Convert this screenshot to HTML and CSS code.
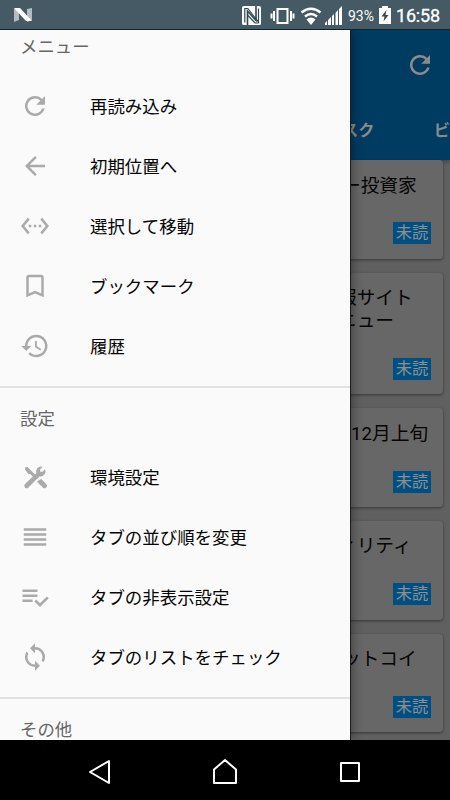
FILE: index.html
```
<!DOCTYPE html>
<html lang="ja">
<head>
<meta charset="utf-8">
<title>メニュー</title>
<link rel="stylesheet" href="styles.css">
</head>
<body>
<div class="phone">
  <header class="status">
    <svg class="android-n" width="20" height="16" viewBox="0 0 20 16"><path fill="#b3bdc1" d="M1 2l5-1v12l-5 2zM14 2l5-1v12l-5 2z"/><path fill="#fff" d="M1 1h6l12 13h-6z"/></svg>
    <div class="status-right">
      <svg width="101" height="22" viewBox="0 0 101 22">
        <path fill="#fff" d="M2 1h15q2 0 2 2v16q0 1-2 1H2q-2 0-2-1V3q0-2 2-2z"/>
        <path fill="none" stroke="#2f4855" stroke-width="1.600" d="M5.500 20V6L14 15.500V1"/>
        <path fill="none" stroke="#2f4855" stroke-width="1.200" d="M2.800 17.500V3.500h3L16.500 17V3.500M5.500 10l7.500 8h3.500"/>
        <path fill="none" stroke="#fff" stroke-width="2" d="M35.500 4h10v14h-10zM32 6v10M49 6v10M29.500 8.500v5M51.500 8.500v5"/>
        <g transform="translate(59 1)" fill="none" stroke="#fff" stroke-width="2.500"><path d="M.5 6.500q9.500-7.500 19 0M4 10.500q6-5 12 0"/><path fill="#fff" stroke="none" d="M5.500 13.500q4.500-4 9 0L10 19z"/></g>
        <path fill="#fff" d="M83 20v-2l2-2v4zM86 20v-5l3-3v8zM90 20v-9l2-2v11zM93.500 20V8l2.500-3v15zM97 20V4l3-3v19z"/>
      </svg>
      <span class="percent">93%</span>
      <svg class="battery" width="12" height="18" viewBox="0 0 12 18"><path fill="#fff" d="M0 2h3V0h6v2h3v16H0z"/><path fill="#37474f" d="M7.500 4L2.500 10.500h3L4.500 15.500l5-6.500h-3z"/></svg>
      <span class="clock">16:58</span>
    </div>
  </header>

  <main class="screen">
    <section class="app">
      <div class="appbar">
        <div class="toolbar"><svg width="30" height="30" viewBox="0 0 24 24" fill="#8b8b8b"><path d="M17.650 6.350A8 8 0 1 0 19.730 14h-2.080A6 6 0 1 1 12 6c1.660 0 3.140.69 4.220 1.780L13 11h7V4z"/></svg></div>
        <div class="tabs"><span class="tab-a">スク</span><span>ビ</span></div>
      </div>
      <div class="cards">
        <article class="card"><p class="title near">ー投資家</p><span class="badge">未読</span></article>
        <article class="card tall"><p class="title">報サイト<br>ニュー</p><span class="badge">未読</span></article>
        <article class="card"><p class="title date">12月上旬</p><span class="badge">未読</span></article>
        <article class="card"><p class="title">ィリティ</p><span class="badge">未読</span></article>
        <article class="card"><p class="title near">ットコイ</p><span class="badge">未読</span></article>
      </div>
    </section>

    <nav class="drawer">
      <h2>メニュー</h2>
      <ul>
        <li><svg viewBox="0 0 24 24"><path d="M17.650 6.350A8 8 0 1 0 19.730 14h-2.080A6 6 0 1 1 12 6c1.660 0 3.140.69 4.220 1.780L13 11h7V4z"/></svg><span>再読み込み</span></li>
        <li><svg viewBox="0 0 24 24"><path d="M20 11H7.830l5.590-5.590L12 4l-8 8 8 8 1.410-1.410L7.830 13H20z"/></svg><span>初期位置へ</span></li>
        <li><svg viewBox="0 0 24 24"><path d="M7.770 6.760L6.230 5.480.82 12l5.410 6.520 1.540-1.280L3.420 12zM7 13h2v-2H7zm10-2h-2v2h2zm-6 2h2v-2h-2zm6.770-7.520l-1.540 1.280L20.580 12l-4.350 5.240 1.540 1.280L23.180 12z"/></svg><span>選択して移動</span></li>
        <li><svg viewBox="0 0 24 24"><path d="M17 3H7c-1.100 0-1.990.9-1.990 2L5 21l7-3 7 3V5c0-1.100-.9-2-2-2zm0 15l-5-2.180L7 18V5h10z"/></svg><span>ブックマーク</span></li>
        <li><svg viewBox="0 0 24 24"><path d="M13 3a9 9 0 0 0-9 9H1l3.890 3.890.07.14L9 12H6c0-3.870 3.130-7 7-7s7 3.130 7 7-3.130 7-7 7c-1.930 0-3.680-.79-4.940-2.060l-1.420 1.420A9 9 0 1 0 13 3zm-1 5v5l4.280 2.540.72-1.210-3.500-2.080V8z"/></svg><span>履歴</span></li>
      </ul>
      <h2 class="ruled">設定</h2>
      <ul>
        <li><svg viewBox="0 0 24 24"><path d="M4.200 4.200L6 4l7 7-1.500 1.500L8 9.500 6.800 9.700 4 6z"/><path d="M17 13.500l4 4a1.900 1.900 0 0 1-2.800 2.800l-4.700-4.700z"/><path d="M20 5.800L17.800 8l-1.600-.4-.4-1.500L18 3.900a4 4 0 0 0-5 5L4 17.600a1.900 1.900 0 0 0 2.700 2.700L15.500 11.500A4 4 0 0 0 20 5.800z"/></svg><span>環境設定</span></li>
        <li><svg viewBox="0 0 24 24"><path d="M3 5h18v2H3zm0 4h18v2H3zm0 4h18v2H3zm0 4h18v2H3z"/></svg><span>タブの並び順を変更</span></li>
        <li><svg viewBox="0 0 24 24"><path d="M14 10H2v2h12zm0-4H2v2h12zM2 16h8v-2H2zm19.500-4.500L23 13l-6.990 7-4.510-4.500L13 14l3.010 3z"/></svg><span>タブの非表示設定</span></li>
        <li><svg viewBox="0 0 24 24"><path d="M12 4V1L8 5l4 4V6c3.310 0 6 2.690 6 6 0 1.010-.25 1.970-.7 2.800l1.460 1.460A8 8 0 0 0 12 4zm0 14c-3.310 0-6-2.690-6-6 0-1.010.25-1.970.7-2.800L5.240 7.740A8 8 0 0 0 12 20v3l4-4-4-4z"/></svg><span>タブのリストをチェック</span></li>
      </ul>
      <h2 class="ruled">その他</h2>
    </nav>
  </main>

  <footer class="navbar">
    <svg width="26" height="28" viewBox="0 0 26 28"><path d="M3 14L22 3v22z"/></svg>
    <svg width="26" height="28" viewBox="0 0 26 28"><path d="M2 25V11.500L13 2l11 9.500V25z"/></svg>
    <svg width="26" height="28" viewBox="0 0 26 28"><path d="M4 5h18v18H4z"/></svg>
  </footer>
</div>
</body>
</html>
```
FILE: styles.css
```
* { box-sizing: border-box; }
body {
  margin: 0;
  font-family: Roboto, "Noto Sans CJK JP", sans-serif;
}
.phone {
  width: 450px;
  height: 800px;
  overflow: hidden;
  display: grid;
  grid-template-rows: 30px 710px 60px;
}
.status {
  background: #455a64;
  border-bottom: 1px solid #10222c;
  display: flex;
  align-items: center;
  justify-content: space-between;
  padding: 2px 10px 0 13px;
  color: #fff;
}
.android-n { margin-bottom: 2px; }
.status-right { display: flex; align-items: center; }
.percent { font-size: 14px; margin-left: 5px; width: 27px; }
.battery { margin: 0 5px 2px 4px; }
.clock { font-size: 18px; font-weight: 400; letter-spacing: -.2px; line-height: 28px; width: 44px; white-space: nowrap; -webkit-text-stroke: .3px #fff; }
.screen { position: relative; overflow: hidden; }
.app { height: 710px; background: #606060; }
.appbar { height: 130px; background: #003b61; color: #8b8b8b; box-shadow: 0 2px 4px rgba(0, 0, 0, .3); }
.toolbar {
  height: 70px;
  display: flex;
  justify-content: flex-end;
  align-items: center;
  padding-right: 15px;
}
.tabs {
  height: 58px;
  display: flex;
  align-items: center;
  padding-left: 342px;
  font-size: 16.200px;
  font-weight: 700;
  white-space: nowrap;
}
.tab-a { width: 94px; }
.cards { display: grid; gap: 14px; padding-right: 7px; }
.card {
  height: 98.700px;
  background: #676767;
  border-radius: 4px;
  box-shadow: 0 1px 3px rgba(0, 0, 0, .45);
  padding: 14.500px 12px 14.300px 338px;
  display: flex;
  flex-direction: column;
  justify-content: space-between;
}
.tall { height: 121.500px; }
.title {
  margin: 0;
  font-size: 18.700px;
  line-height: 23px;
  white-space: nowrap;
  color: #050505;
}
.near { padding-left: 4px; }
.date { padding-left: 13px; }
.badge {
  align-self: flex-end;
  width: 38px;
  height: 22px;
  background: #004f82;
  color: #8f8f8f;
  font-size: 16.200px;
  line-height: 22px;
  text-align: center;
}
.drawer {
  position: absolute;
  top: 0;
  left: 0;
  width: 350px;
  height: 710px;
  overflow: hidden;
  background: #fafafa;
  box-shadow: 1px 0 0 #1c1c1c, 2px 0 10px rgba(0, 0, 0, .4);
}
.drawer h2 {
  margin: 0;
  height: 60px;
  line-height: 60px;
  padding-left: 20px;
  font-size: 17.400px;
  font-weight: 400;
  color: #666;
}
.drawer h2:first-child { height: 46px; line-height: 34px; }
.drawer h2.ruled { height: 61px; line-height: 62px; border-top: 2px solid #e2e2e2; }
.drawer ul { list-style: none; margin: 0; padding: 0 0 10px; }
.drawer li {
  height: 60px;
  display: flex;
  align-items: center;
  gap: 40px;
  padding-left: 20px;
  font-size: 17.450px;
  color: #050505;
  white-space: nowrap;
}
.drawer li span { padding-bottom: 2px; }
.drawer li svg { width: 30px; height: 30px; fill: #aaa; flex: none; }
.navbar {
  background: #000;
  display: flex;
  align-items: center;
  justify-content: space-between;
  padding: 3px 87px 0;
}
.navbar svg { fill: none; stroke: #fff; stroke-width: 2; stroke-linejoin: round; }
```
